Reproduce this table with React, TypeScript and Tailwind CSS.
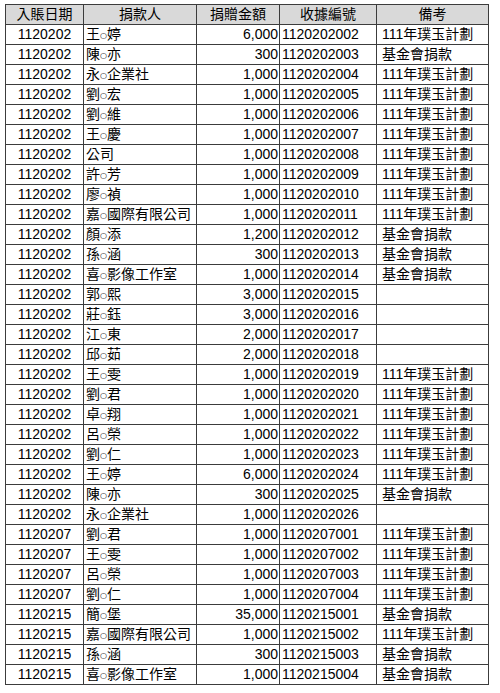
import React from "react";

type Row = [string, string, string, string, string];

const rows: Row[] = [
  ["1120202", "王○婷", "6,000", "1120202002", "111年璞玉計劃"],
  ["1120202", "陳○亦", "300", "1120202003", "基金會捐款"],
  ["1120202", "永○企業社", "1,000", "1120202004", "111年璞玉計劃"],
  ["1120202", "劉○宏", "1,000", "1120202005", "111年璞玉計劃"],
  ["1120202", "劉○維", "1,000", "1120202006", "111年璞玉計劃"],
  ["1120202", "王○慶", "1,000", "1120202007", "111年璞玉計劃"],
  ["1120202", "公司", "1,000", "1120202008", "111年璞玉計劃"],
  ["1120202", "許○芳", "1,000", "1120202009", "111年璞玉計劃"],
  ["1120202", "廖○禎", "1,000", "1120202010", "111年璞玉計劃"],
  ["1120202", "嘉○國際有限公司", "1,000", "1120202011", "111年璞玉計劃"],
  ["1120202", "顏○添", "1,200", "1120202012", "基金會捐款"],
  ["1120202", "孫○涵", "300", "1120202013", "基金會捐款"],
  ["1120202", "喜○影像工作室", "1,000", "1120202014", "基金會捐款"],
  ["1120202", "郭○熙", "3,000", "1120202015", ""],
  ["1120202", "莊○鈺", "3,000", "1120202016", ""],
  ["1120202", "江○東", "2,000", "1120202017", ""],
  ["1120202", "邱○茹", "2,000", "1120202018", ""],
  ["1120202", "王○雯", "1,000", "1120202019", "111年璞玉計劃"],
  ["1120202", "劉○君", "1,000", "1120202020", "111年璞玉計劃"],
  ["1120202", "卓○翔", "1,000", "1120202021", "111年璞玉計劃"],
  ["1120202", "呂○榮", "1,000", "1120202022", "111年璞玉計劃"],
  ["1120202", "劉○仁", "1,000", "1120202023", "111年璞玉計劃"],
  ["1120202", "王○婷", "6,000", "1120202024", "111年璞玉計劃"],
  ["1120202", "陳○亦", "300", "1120202025", "基金會捐款"],
  ["1120202", "永○企業社", "1,000", "1120202026", ""],
  ["1120207", "劉○君", "1,000", "1120207001", "111年璞玉計劃"],
  ["1120207", "王○雯", "1,000", "1120207002", "111年璞玉計劃"],
  ["1120207", "呂○榮", "1,000", "1120207003", "111年璞玉計劃"],
  ["1120207", "劉○仁", "1,000", "1120207004", "111年璞玉計劃"],
  ["1120215", "簡○堡", "35,000", "1120215001", "基金會捐款"],
  ["1120215", "嘉○國際有限公司", "1,000", "1120215002", "111年璞玉計劃"],
  ["1120215", "孫○涵", "300", "1120215003", "基金會捐款"],
  ["1120215", "喜○影像工作室", "1,000", "1120215004", "基金會捐款"],
];

function Name({ text }: { text: string }) {
  const parts = text.split("○");
  if (parts.length === 1) return <>{text}</>;
  return (
    <>
      {parts[0]}
      <span className="text-[8px] leading-[8px] align-[1px] font-['DejaVu_Sans',sans-serif]">○</span>
      {parts[1]}
    </>
  );
}

const cell = "border border-[#3c3c3c] p-0 font-normal";
const inner = "h-[19px] leading-[19px] overflow-hidden whitespace-nowrap";

export default function App() {
  return (
    <div className="bg-white w-[500px] h-[693px] pt-[4px] pl-[5px] font-['Liberation_Sans','Noto_Sans_CJK_TC',sans-serif] text-[14px] text-black">
      <table className="table-fixed border-collapse w-[483px] border border-[#555]">
        <colgroup>
          <col className="w-[78px]" />
          <col className="w-[113px]" />
          <col className="w-[83px]" />
          <col className="w-[97px]" />
          <col className="w-[112px]" />
        </colgroup>
        <thead>
          <tr className="bg-[#d9d9d9]">
            <th className={cell}><div className={`${inner} text-center`}>入賬日期</div></th>
            <th className={cell}><div className={`${inner} text-center`}>捐款人</div></th>
            <th className={cell}><div className={`${inner} text-center`}>捐贈金額</div></th>
            <th className={cell}><div className={`${inner} text-center`}>收據編號</div></th>
            <th className={cell}><div className={`${inner} text-center`}>備考</div></th>
          </tr>
        </thead>
        <tbody>
          {rows.map((r, i) => (
            <tr key={i}>
              <td className={cell}><div className={`${inner} text-center`}>{r[0]}</div></td>
              <td className={cell}>
                <div className={`${inner} text-left pl-[2px]`}>
                  <Name text={r[1]} />
                </div>
              </td>
              <td className={cell}><div className={`${inner} text-right pr-[1px]`}>{r[2]}</div></td>
              <td className={cell}><div className={`${inner} text-left pl-[2px]`}>{r[3]}</div></td>
              <td className={cell}><div className={`${inner} text-left pl-[5px]`}>{r[4]}</div></td>
            </tr>
          ))}
        </tbody>
      </table>
    </div>
  );
}
